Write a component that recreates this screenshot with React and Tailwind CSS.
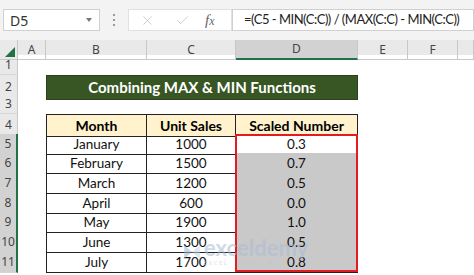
import { X, Check } from "lucide-react";

const COLS = "grid grid-cols-[18px_28px_101px_89px_122px_50px_50px_16px]";
const HEIGHTS = [20, 19, 20, 20, 19, 20, 20, 19, 20, 20, 19];

const DATA = [
  ["January", "1000", "0.3"],
  ["February", "1500", "0.7"],
  ["March", "1200", "0.5"],
  ["April", "600", "0.0"],
  ["May", "1900", "1.0"],
  ["June", "1300", "0.5"],
  ["July", "1700", "0.8"],
];

const cellFont = { fontFamily: "Lato, 'Noto Sans', sans-serif" };

function RowHead({ n, selected }) {
  return (
    <div
      className={`flex items-center justify-center text-[12px] text-[#444] border-b border-[#d6d6d6] ${
        selected ? "bg-[#d2d2d2] border-r-2 border-r-[#217346]" : "bg-[#e9e9e9] border-r border-r-[#c8c8c8]"
      }`}
    >
      {n}
    </div>
  );
}

export default function App() {
  return (
    <div className="w-[474px] h-[275px] overflow-hidden bg-white" style={{ fontFamily: "'Noto Sans', 'Open Sans', sans-serif" }}>
      {/* formula bar */}
      <div className="h-[40px] bg-[#f3f3f3] flex items-center pl-[3px]">
        <div className="shrink-0 w-[97px] h-[22px] bg-white border border-[#d0d0d0] flex items-center justify-between pl-[6px] pr-[7px]">
          <span className="text-[14px] text-[#333]">D5</span>
          <span className="w-0 h-0 border-l-[3px] border-r-[3px] border-t-[4px] border-l-transparent border-r-transparent border-t-[#777]" />
        </div>
        <div className="shrink-0 w-[28px] flex flex-col items-center gap-[3px]">
          <span className="w-[2px] h-[2px] bg-[#999]" />
          <span className="w-[2px] h-[2px] bg-[#999]" />
          <span className="w-[2px] h-[2px] bg-[#999]" />
        </div>
        <div className="shrink-0 w-[104px] h-[22px] bg-white border border-[#e0e0e0] flex items-center text-[#bdbdbd]">
          <X className="ml-[11px] w-[15px] h-[15px]" strokeWidth={1.2} />
          <Check className="ml-[20px] w-[15px] h-[15px]" strokeWidth={1.2} />
          <span className="ml-[15px] text-[15px] italic text-[#666]" style={{ fontFamily: "'Liberation Serif', serif" }}>
            f<span className="text-[12px]">x</span>
          </span>
        </div>
        <div className="flex-1 min-w-0 overflow-hidden h-[22px] bg-white border border-[#d0d0d0] flex items-center pl-[11px]">
          <span className="text-[13px] tracking-[-0.5px] text-[#222] whitespace-nowrap" style={cellFont}>
            =(C5 - MIN(C:C)) / (MAX(C:C) - MIN(C:C))
          </span>
        </div>
      </div>

      {/* sheet */}
      <div className="relative">
        <div className={`${COLS} h-[15px] bg-[#e9e9e9] text-[12px] text-[#444]`}>
          <div className="relative border-r border-b border-[#c8c8c8]">
            <span
              className="absolute right-[2px] bottom-[2px] w-0 h-0"
              style={{ borderLeft: "10px solid transparent", borderBottom: "10px solid #217346" }}
            />
          </div>
          {["A", "B", "C", "D", "E", "F", ""].map((c) => (
            <div
              key={c || "g"}
              className={`flex items-center justify-center border-r border-[#c8c8c8] ${
                c === "D" ? "bg-[#d2d2d2] border-b-2 border-b-[#217346]" : "border-b"
              }`}
            >
              {c}
            </div>
          ))}
        </div>

        {HEIGHTS.map((h, i) => {
          const n = i + 1;
          const sel = n >= 5;
          const d = DATA[n - 5];
          return (
            <div key={n} className={COLS} style={{ height: h }}>
              <RowHead n={n} selected={sel} />
              <div />
              {n === 2 ? (
                <div
                  className="col-span-3 bg-[#375623] border border-[#2a431a] flex items-center justify-center text-white font-bold text-[15px]"
                  style={cellFont}
                >
                  Combining MAX &amp; MIN Functions
                </div>
              ) : n === 4 ? (
                <>
                  {["Month", "Unit Sales", "Scaled Number"].map((t, j) => (
                    <div
                      key={t}
                      className={`bg-[#fff2cc] border-t border-b border-r border-[#222] flex items-center justify-center font-bold text-[14px] text-black ${
                        j === 0 ? "border-l" : ""
                      }`}
                      style={cellFont}
                    >
                      {t}
                    </div>
                  ))}
                </>
              ) : d ? (
                <>
                  <div className="border-l border-r border-b border-[#222] flex items-center justify-center text-[13.5px] text-[#111]" style={cellFont}>
                    {d[0]}
                  </div>
                  <div className="border-r border-b border-[#222] flex items-center justify-center text-[13.5px] text-[#111]" style={cellFont}>
                    {d[1]}
                  </div>
                  <div
                    className={`border-r border-b border-[#222] flex items-center justify-center text-[13.5px] text-[#111] ${
                      n === 5 ? "bg-white" : "bg-[#c9c9c9]"
                    }`}
                    style={cellFont}
                  >
                    {d[2]}
                  </div>
                </>
              ) : (
                <>
                  <div />
                  <div />
                  <div />
                </>
              )}
              <div />
              <div />
              <div />
            </div>
          );
        })}

        {/* selection outline */}
        <div className="absolute left-[235px] top-[94px] w-[123px] h-[138px] border-[2.5px] border-[#e31b23] pointer-events-none" />

        {/* watermark */}
        <div className="absolute left-[182px] top-[197px] flex items-center gap-[2px] opacity-55 pointer-events-none">
          <svg width="20" height="20" viewBox="0 0 18 18">
            <path d="M2 3 L9 9 L2 15 Z" fill="#9fb4cf" />
            <path d="M16 3 L9 9 L16 15 Z" fill="#c4d2e3" />
          </svg>
          <div className="flex flex-col leading-none">
            <span className="text-[22px] font-bold text-[#a9bcd6]" style={cellFont}>exceldemy</span>
            <span className="text-[6px] tracking-[1.5px] text-[#b8c6d8] mt-[1px]">EXCEL · DATA · BI</span>
          </div>
        </div>
      </div>
    </div>
  );
}
